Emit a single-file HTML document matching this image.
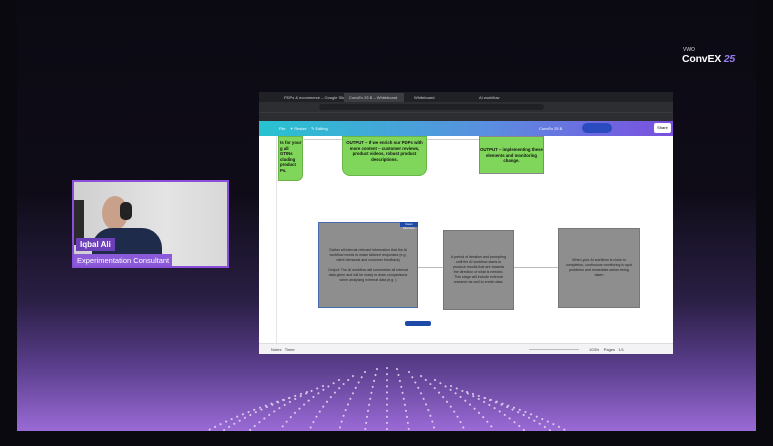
<!DOCTYPE html>
<html><head><meta charset="utf-8"><style>
*{margin:0;padding:0;box-sizing:border-box}
body{width:773px;height:446px;overflow:hidden;background:#0a0910;font-family:"Liberation Sans",sans-serif;position:relative}
.stage{position:absolute;left:17px;top:0;width:739px;height:431px;background:linear-gradient(180deg,#0b0a12 0%,#0f0c18 45%,#2a1f45 70%,#5a3e8c 85%,#9a6ad6 100%)}
.abs{position:absolute}
.screen{left:259px;top:92px;width:414px;height:262px;background:#fff;overflow:hidden}
.tabs{left:0;top:0;width:414px;height:10px;background:#202124}
.addr{left:0;top:10px;width:414px;height:10px;background:#2d2e31}
.bm{left:0;top:20px;width:414px;height:9px;background:#2d2e31;border-top:1px solid #3a3a3a}
.tool{left:0;top:29px;width:414px;height:15px;background:linear-gradient(90deg,#27c3d0,#5a8fe0 55%,#7b4fe0)}
.side{left:0;top:44px;width:18px;height:207px;background:#fff;border-right:1px solid #e5e5e5}
.bot{left:0;top:251px;width:414px;height:11px;background:#f3f3f5;border-top:1px solid #ddd}
.green{background:#7fd65a;border:1px solid #6ab548;font-size:4.3px;font-weight:bold;text-align:center;color:#111;line-height:5.5px;padding-top:3px;overflow:hidden}
.gray{background:#8e8e8e;border:1px solid #777;font-size:3.6px;color:#222;text-align:center;line-height:5px;display:flex;align-items:center;justify-content:center;padding:6px}
.t{font-size:4px;color:#ccc}
</style></head><body>
<div class="stage">
<svg class="abs" style="left:0;top:0" width="739" height="431">
<g fill="none" stroke="#e6dcf6" stroke-width="2" stroke-linecap="round" stroke-dasharray="0.1 6" opacity="0.85">
<path d="M370 368 L370 431"/>
<path d="M360 369 Q352 400 348 431"/>
<path d="M380 369 Q388 400 392 431"/>
<path d="M348 372 Q330 400 322 431"/>
<path d="M392 372 Q410 400 418 431"/>
<path d="M336 376 Q306 400 292 431"/>
<path d="M404 376 Q434 400 448 431"/>
<path d="M322 380 Q284 402 262 431"/>
<path d="M418 380 Q456 402 478 431"/>
<path d="M306 386 Q262 404 232 431"/>
<path d="M434 386 Q478 404 508 431"/>
<path d="M290 392 Q240 408 206 431"/>
<path d="M450 392 Q500 408 534 431"/>
<path d="M272 398 Q226 412 190 431"/>
<path d="M468 398 Q514 412 550 431"/>
</g>
</svg>
<div class="abs" style="left:666px;top:47px;font-size:5px;color:#ddd">VWO</div>
<div class="abs" style="left:665px;top:53px;font-size:10.5px;font-weight:bold;color:#fff;letter-spacing:-0.2px">ConvEX <span style="color:#9a7cf0;font-style:italic">25</span></div>

<div class="abs" style="left:55px;top:180px;width:157px;height:88px;border:2px solid #8a4fd8;background:linear-gradient(90deg,#cfcfd0,#e4e4e4 60%,#d8d8d8);overflow:hidden">
<div class="abs" style="left:0;top:18px;width:10px;height:45px;background:#2a2a2a"></div>
<div class="abs" style="left:28px;top:14px;width:26px;height:34px;border-radius:50%;background:#c9a08a"></div>
<div class="abs" style="left:46px;top:20px;width:12px;height:18px;border-radius:5px;background:#222"></div>
<div class="abs" style="left:18px;top:46px;width:70px;height:45px;border-radius:20px 20px 0 0;background:#1f2b4a"></div>
<div class="abs" style="left:2px;top:56px;background:#6b3fb8;color:#fff;font-weight:bold;font-size:8px;padding:2px 4px">Iqbal Ali</div>
<div class="abs" style="left:0;top:72px;background:#8a5ad8;color:#fff;font-size:7.5px;padding:2px 3px">Experimentation Consultant</div>
</div>

<div class="abs screen" style="left:242px">
<div class="abs tabs"><div class="abs t" style="left:25px;top:3px">PDPs &amp; ecommerce – Google Slides</div><div class="abs" style="left:85px;top:1px;width:60px;height:9px;background:#3c3d40"></div><div class="abs t" style="left:90px;top:3px">ConvEx 25 B – Whiteboard</div><div class="abs t" style="left:155px;top:3px">Whiteboard</div><div class="abs t" style="left:220px;top:3px">AI workflow</div></div>
<div class="abs addr"><div class="abs" style="left:60px;top:2px;width:225px;height:6px;background:#202124;border-radius:3px"></div></div>
<div class="abs bm"></div>
<div class="abs tool"><div class="abs" style="left:20px;top:5px;font-size:4px;color:#fff">File &nbsp;&nbsp; ✦ Resize &nbsp;&nbsp; ✎ Editing</div><div class="abs" style="left:280px;top:5px;font-size:4px;color:#fff">ConvEx 25 B</div><div class="abs" style="left:323px;top:2px;width:30px;height:10px;border-radius:5px;background:#2a4bbf"></div><div class="abs" style="left:395px;top:2px;width:17px;height:10px;border-radius:2px;background:#fff;font-size:4px;text-align:center;line-height:10px">Share</div></div>
<div class="abs side"></div>
<div class="abs green" style="left:19px;top:44px;width:25px;height:45px;border-radius:0 0 6px 0;text-align:left;padding-left:1px">ts for your<br>g all GTINs<br>cluding<br>product<br>Ps.</div>
<div class="abs green" style="left:83px;top:44px;width:85px;height:40px;border-radius:0 0 8px 8px">OUTPUT – If we enrich our PDPs with<br>more content – customer reviews,<br>product videos, robust product<br>descriptions.</div>
<div class="abs green" style="left:220px;top:44px;width:65px;height:38px;border-color:#888;padding-top:10px">OUTPUT – implementing these<br>elements and monitoring<br>change.</div>
<div class="abs" style="left:45px;top:47px;width:38px;border-top:1px solid #ccc"></div>
<div class="abs" style="left:168px;top:47px;width:52px;border-top:1px solid #ccc"></div>
<div class="abs gray" style="left:59px;top:130px;width:100px;height:86px;border:1px solid #4a6ab0">Gather all internal relevant information that the AI workflow needs to make tailored responses (e.g. client demands and customer feedback)<br><br>Output: The AI workflow will summarise all internal data given and will be ready to draw comparisons when analysing external data (e.g. )</div>
<div class="abs" style="left:141px;top:130px;width:18px;height:5px;background:#1e4aa8;font-size:3px;color:#fff;text-align:center">Dean Morrison</div>
<div class="abs gray" style="left:184px;top:138px;width:71px;height:80px">A period of iteration and prompting until the AI workflow starts to produce results that are towards the direction of what is needed. This stage will include external research as well to enrich data.</div>
<div class="abs gray" style="left:299px;top:136px;width:82px;height:80px">When your AI workflow is close to completion, continuous monitoring to spot problems and immediate action being taken</div>
<div class="abs" style="left:159px;top:175px;width:25px;border-top:1px solid #bbb"></div>
<div class="abs" style="left:255px;top:175px;width:44px;border-top:1px solid #bbb"></div>
<div class="abs" style="left:146px;top:229px;width:26px;height:5px;border-radius:2px;background:#1e4aa8"></div>
<div class="abs bot"><div class="abs" style="left:12px;top:3px;font-size:4px;color:#444">Notes &nbsp; Timer</div><div class="abs" style="left:270px;top:5px;width:50px;border-top:1px solid #bbb"></div><div class="abs" style="left:330px;top:3px;font-size:4px;color:#444">103% &nbsp;&nbsp; Pages &nbsp; 1/1</div></div>
</div>
</div>
</body></html>
